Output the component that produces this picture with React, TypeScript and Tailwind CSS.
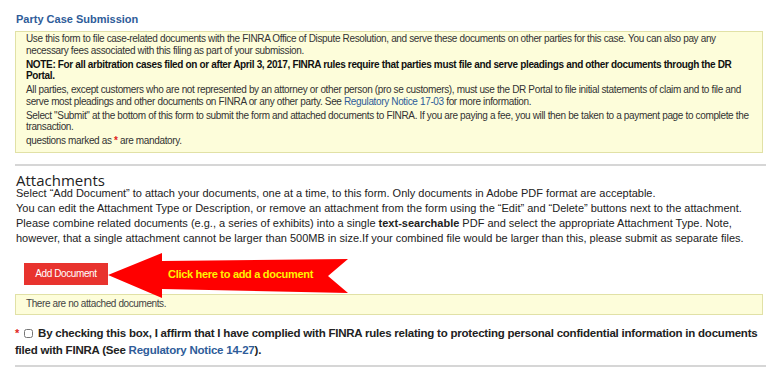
export default function App() {
  return (
    <div className="w-[774px] h-[373px] overflow-hidden bg-white font-['Liberation_Sans',Arial,sans-serif] text-[#333]">
      <div className="w-[751px] ml-[15px]">
        <h1 className="pt-[12px] pl-[1px] text-[11px] leading-[14px] font-bold text-[#2e5c99]">
          Party Case Submission
        </h1>

        <div className="mt-[5px] w-[748px] border border-[#e1e1a6] bg-[#fdfdda] px-[10px] pt-[1px] pb-[5px] text-[10px] leading-[11.5px] tracking-[-0.35px] text-[#333] whitespace-nowrap flex flex-col gap-[2.5px]">
          <p>
            Use this form to file case-related documents with the FINRA Office of Dispute Resolution, and serve
            these documents on other parties for this case. You can also pay any
            <br />
            necessary fees associated with this filing as part of your submission.
          </p>
          <p className="font-bold text-[#111]">
            NOTE: For all arbitration cases filed on or after April 3, 2017, FINRA rules require that parties must
            file and serve pleadings and other documents through the DR
            <br />
            Portal.
          </p>
          <p>
            All parties, except customers who are not represented by an attorney or other person (pro se
            customers), must use the DR Portal to file initial statements of claim and to file and
            <br />
            serve most pleadings and other documents on FINRA or any other party. See{" "}
            <a className="text-[#2e5c99]">Regulatory Notice 17-03</a> for more information.
          </p>
          <p>
            Select "Submit" at the bottom of this form to submit the form and attached documents to FINRA. If you
            are paying a fee, you will then be taken to a payment page to complete the
            <br />
            transaction.
          </p>
          <p>
            questions marked as <span className="text-[#e0241b] font-bold">*</span> are mandatory.
          </p>
        </div>

        <div className="mt-[11px] h-[2px] bg-[#d6d6d6]" />

        <h2 className="mt-[10px] pl-[1px] font-['Open_Sans',sans-serif] text-[15px] leading-[8px] text-[#222]">
          Attachments
        </h2>
        <div className="mt-[2px] pl-[1px] text-[11px] leading-[15px] text-[#222] whitespace-nowrap">
          <p>
            Select “Add Document” to attach your documents, one at a time, to this form. Only documents in Adobe PDF
            format are acceptable.
          </p>
          <p>
            You can edit the Attachment Type or Description, or remove an attachment from the form using the “Edit”
            and “Delete” buttons next to the attachment.
          </p>
          <p>
            Please combine related documents (e.g., a series of exhibits) into a single <b>text-searchable</b> PDF and
            select the appropriate Attachment Type. Note,
          </p>
          <p>
            however, that a single attachment cannot be larger than 500MB in size.If your combined file would be
            larger than this, please submit as separate files.
          </p>
        </div>

        <div className="relative mt-[17px] h-[22px] flex">
          <button className="ml-[9px] h-[22px] w-[84px] bg-[#e8332e] text-[10px] tracking-[-0.4px] text-white">
            Add Document
          </button>
          <svg className="absolute left-[90px] top-[-12px]" width="247" height="50" viewBox="0 0 247 50">
            <polygon points="3,24 57,2 57,10 243,8 223,25 243,42 57,38 57,47" fill="#ff0000" />
          </svg>
          <span className="absolute left-[153px] top-[4px] text-[11px] leading-[14px] font-bold tracking-[-0.3px] text-[#fff200] whitespace-nowrap">
            Click here to add a document
          </span>
        </div>

        <div className="mt-[9px] w-[748px] h-[21px] border border-[#e1e1a6] bg-[#fdfdda] px-[10px] pt-[3px] text-[10px] leading-[12px] tracking-[-0.4px] text-[#444]">
          There are no attached documents.
        </div>

        <p className="mt-[10px] text-[11.5px] leading-[17px] font-bold tracking-[-0.22px] text-[#222] whitespace-nowrap">
          <span className="text-[#e0241b] align-top text-[11px]">*</span>
          <input type="checkbox" className="mx-[5px] h-[9px] w-[9px] align-middle" />
          By checking this box, I affirm that I have complied with FINRA rules relating to protecting personal
          confidential information in documents
          <br />
          filed with FINRA (See <a className="text-[#2e5c99]">Regulatory Notice 14-27</a>).
        </p>

        <div className="mt-[6px] h-[2px] bg-[#d6d6d6]" />
      </div>
    </div>
  );
}
